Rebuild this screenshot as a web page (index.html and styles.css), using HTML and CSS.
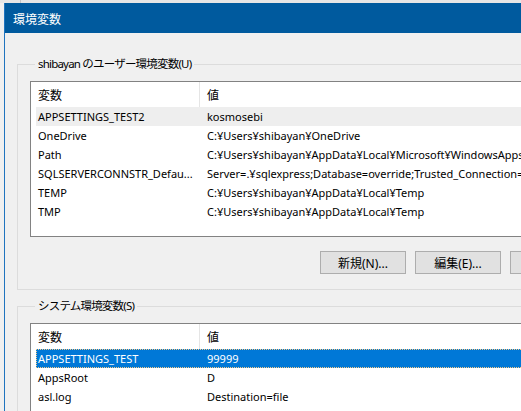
FILE: index.html
```html
<!DOCTYPE html>
<html lang="ja">
<head>
<meta charset="utf-8">
<title>環境変数</title>
<link rel="stylesheet" href="styles.css">
</head>
<body>
<div class="behind"><div class="behind-edge"></div></div>
<div class="window">
  <div class="titlebar">環境変数</div>
  <div class="content">
    <fieldset class="group">
      <legend>shibayan のユーザー環境変数(U)</legend>
      <div class="listbox user-list">
        <div class="row head"><div class="c1">変数</div><div class="c2">値</div></div>
        <div class="row inactive"><div class="c1">APPSETTINGS_TEST2</div><div class="c2">kosmosebi</div></div>
        <div class="row"><div class="c1">OneDrive</div><div class="c2">C:¥Users¥shibayan¥OneDrive</div></div>
        <div class="row"><div class="c1">Path</div><div class="c2">C:¥Users¥shibayan¥AppData¥Local¥Microsoft¥WindowsApps;</div></div>
        <div class="row"><div class="c1">SQLSERVERCONNSTR_Defau...</div><div class="c2">Server=.¥sqlexpress;Database=override;Trusted_Connection=True</div></div>
        <div class="row"><div class="c1">TEMP</div><div class="c2">C:¥Users¥shibayan¥AppData¥Local¥Temp</div></div>
        <div class="row"><div class="c1">TMP</div><div class="c2">C:¥Users¥shibayan¥AppData¥Local¥Temp</div></div>
      </div>
      <div class="buttons">
        <button class="btn">新規(N)...</button>
        <button class="btn">編集(E)...</button>
        <button class="btn">削除(D)</button>
      </div>
    </fieldset>
    <fieldset class="group system">
      <legend>システム環境変数(S)</legend>
      <div class="listbox sys-list">
        <div class="row head"><div class="c1">変数</div><div class="c2">値</div></div>
        <div class="row selected"><div class="c1">APPSETTINGS_TEST</div><div class="c2">99999</div></div>
        <div class="row"><div class="c1">AppsRoot</div><div class="c2">D</div></div>
        <div class="row"><div class="c1">asl.log</div><div class="c2">Destination=file</div></div>
        <div class="row"><div class="c1">ComSpec</div><div class="c2">C:¥WINDOWS¥system32¥cmd.exe</div></div>
      </div>
    </fieldset>
  </div>
</div>
</body>
</html>
```
FILE: styles.css
```css
html, body {
  margin: 0;
  padding: 0;
  width: 521px;
  height: 411px;
  overflow: hidden;
}
body {
  background: #f0f0f0;
  font-family: "Noto Sans", "Noto Sans CJK JP", sans-serif;
  font-size: 12px;
  color: #000;
}
.behind {
  height: 3px;
  background: #e6e6e6;
}
.behind-edge {
  margin-left: 20px;
  width: 0;
  height: 3px;
  border-left: 1px solid #c4c4c4;
}
.window {
  margin-left: 4px;
  width: 620px;
  height: 420px;
  border-left: 1px solid #1f74bf;
  background: #f0f0f0;
}
.titlebar {
  height: 30px;
  background: #005a9e;
  color: #fff;
  display: flex;
  align-items: center;
  padding-left: 8px;
  font-family: "Noto Sans CJK JP", sans-serif;
  font-size: 12px;
}
.content {
  padding: 23px 0 0 12px;
}
.group {
  box-sizing: border-box;
  width: 592px;
  margin: 0;
  padding: 9px 12px 15px 12px;
  border: 1px solid #dcdcdc;
  min-width: 0;
}
.group legend {
  margin-left: 5px;
  padding: 0 3px;
  line-height: 16px;
  font-size: 11.5px;
  letter-spacing: -0.8px;
}
.group.system {
  margin-top: 8px;
}
.listbox {
  background: #fff;
  border: 1px solid #828282;
  overflow: hidden;
}
.user-list {
  height: 154px;
}
.sys-list {
  height: 154px;
}
.row {
  display: grid;
  grid-template-columns: 163px 1fr;
  margin-left: 5px;
  height: 19px;
  align-items: center;
  white-space: nowrap;
  font-size: 11px;
}
.row .c1 {
  padding-left: 2px;
  overflow: hidden;
}
.row .c2 {
  padding-left: 8px;
  overflow: hidden;
}
.row.head {
  height: 25px;
  align-items: stretch;
  font-size: 12px;
}
.row.head .c1,
.row.head .c2 {
  display: flex;
  align-items: center;
}
.row.head .c2 {
  border-left: 1px solid #e5e5e5;
  padding-left: 7px;
}
.row.inactive {
  background: #eeeeee;
}
.row.selected {
  background: #0078d7;
  color: #fff;
  outline: 1px dotted #f3c98a;
  outline-offset: -1px;
}
.buttons {
  display: flex;
  justify-content: flex-end;
  gap: 9px;
  margin-top: 14px;
}
.btn {
  box-sizing: border-box;
  width: 86px;
  height: 23px;
  margin: 0;
  padding: 0;
  border: 1px solid #adadad;
  background: #e1e1e1;
  font-family: "Noto Sans", "Noto Sans CJK JP", sans-serif;
  font-size: 12px;
  color: #000;
}
```
